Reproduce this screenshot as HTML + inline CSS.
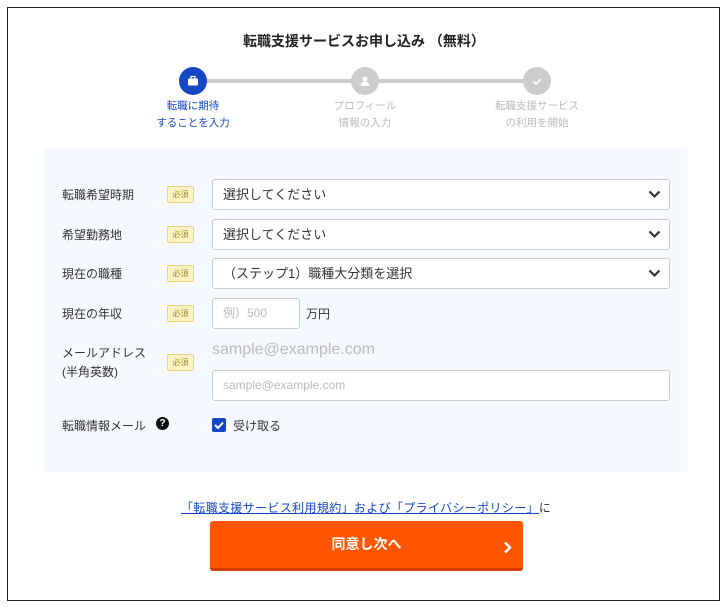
<!DOCTYPE html>
<html><head><meta charset="utf-8"><style>
*{margin:0;padding:0;box-sizing:border-box}
body{width:728px;height:608px;background:#fff;font-family:"Liberation Sans","Noto Sans CJK JP",sans-serif;position:relative;overflow:hidden;color:#333}
.frame{position:absolute;left:7px;top:7px;width:713px;height:594px;border:1px solid #222}
.a{position:absolute}
.title{left:0;width:728px;top:31px;text-align:center;font-size:14px;font-weight:bold;color:#222}
.line{top:79px;height:4px;background:#ccc}
.c{width:28px;height:28px;border-radius:50%;top:67px;background:#ccc}
.st{font-size:10.5px;text-align:center;line-height:17px;top:98px;width:140px;color:#bbb}
.panel{left:44px;top:148px;width:644px;height:324px;background:#f5f8fe;border-radius:4px}
.lb{left:62px;font-size:12px;color:#333}
.req{left:167px;width:27px;height:17px;background:#fdf3c4;border:1px solid #e6d47a;border-radius:2px;font-size:8px;color:#a08a2a;text-align:center;line-height:15px}
.sel{left:212px;width:458px;height:31px;background:#fff;border:1px solid #ccc;border-radius:3px;font-size:13px;line-height:29px;padding-left:10px;color:#333}
.chev{position:absolute;right:8px;top:9px}
</style></head><body>
<div class="frame"></div>
<div class="a title">転職支援サービスお申し込み （無料）</div>
<div class="a line" style="left:193px;width:344px"></div>
<div class="a c" style="left:179px;background:#1547c5"></div>
<svg class="a" style="left:187px;top:75px" width="12" height="12" viewBox="0 0 12 12"><rect x="1" y="3.5" width="10" height="7" rx="1" fill="#fff"/><rect x="4" y="1.5" width="4" height="3" fill="none" stroke="#fff" stroke-width="1.2"/></svg>
<div class="a c" style="left:351px"></div>
<svg class="a" style="left:359px;top:75px" width="12" height="12" viewBox="0 0 12 12"><circle cx="6" cy="4" r="2.5" fill="#fff"/><path d="M1.5 11c0-3 2-4.5 4.5-4.5s4.5 1.5 4.5 4.5z" fill="#fff"/></svg>
<div class="a c" style="left:523px"></div>
<svg class="a" style="left:531px;top:75px" width="12" height="12" viewBox="0 0 12 12"><path d="M2.5 6.5l2.5 2.5 5-5" stroke="#fff" stroke-width="1.8" fill="none"/></svg>
<div class="a st" style="left:123px;color:#1547c5">転職に期待<br>することを入力</div>
<div class="a st" style="left:295px">プロフィール<br>情報の入力</div>
<div class="a st" style="left:467px">転職支援サービス<br>の利用を開始</div>
<div class="a panel"></div>
<div class="a lb" style="top:186px">転職希望時期</div>
<div class="a req" style="top:186px">必須</div>
<div class="a sel" style="top:179px">選択してください<svg class="chev" width="13" height="10" viewBox="0 0 13 10"><path d="M1.5 2.5l5 5 5-5" stroke="#333" stroke-width="2.2" fill="none"/></svg></div>
<div class="a lb" style="top:226px">希望勤務地</div>
<div class="a req" style="top:226px">必須</div>
<div class="a sel" style="top:219px">選択してください<svg class="chev" width="13" height="10" viewBox="0 0 13 10"><path d="M1.5 2.5l5 5 5-5" stroke="#333" stroke-width="2.2" fill="none"/></svg></div>
<div class="a lb" style="top:265px">現在の職種</div>
<div class="a req" style="top:265px">必須</div>
<div class="a sel" style="top:258px">（ステップ1）職種大分類を選択<svg class="chev" width="13" height="10" viewBox="0 0 13 10"><path d="M1.5 2.5l5 5 5-5" stroke="#333" stroke-width="2.2" fill="none"/></svg></div>
<div class="a lb" style="top:305px">現在の年収</div>
<div class="a req" style="top:305px">必須</div>
<div class="a sel" style="top:298px;width:88px;color:#bbb;font-size:12px">例）500</div>
<div class="a" style="left:306px;top:305px;font-size:12px">万円</div>
<div class="a lb" style="top:344px;line-height:19px">メールアドレス<br>(半角英数)</div>
<div class="a req" style="top:354px">必須</div>
<div class="a" style="left:212px;top:341px;font-size:16px;color:#bbb">sample@example.com</div>
<div class="a sel" style="top:370px;color:#bbb;font-size:12px">sample@example.com</div>
<div class="a lb" style="top:417px">転職情報メール</div>
<div class="a" style="left:156px;top:417px;width:13px;height:13px;border-radius:50%;background:#111;color:#fff;font-size:10px;font-weight:bold;text-align:center;line-height:13px">?</div>
<div class="a" style="left:212px;top:418px;width:14px;height:14px;background:#1547c5;border-radius:2px"></div>
<svg class="a" style="left:212px;top:418px" width="14" height="14" viewBox="0 0 14 14"><path d="M3 7l3 3 5-5.5" stroke="#fff" stroke-width="2" fill="none"/></svg>
<div class="a" style="left:233px;top:417px;font-size:12px">受け取る</div>
<div class="a" style="left:181px;top:499px;font-size:12px;color:#333;letter-spacing:0.35px"><span style="color:#1547c5;text-decoration:underline">「転職支援サービス利用規約」および「プライバシーポリシー」</span>に</div>
<div class="a" style="left:210px;top:521px;width:313px;height:50px;background:#ff5400;border-radius:3px;border-bottom:3px solid #d43c00;color:#fff;font-size:14px;font-weight:bold;text-align:center;line-height:47px">同意し次へ</div>
<svg class="a" style="left:503px;top:541px" width="10" height="13" viewBox="0 0 10 13"><path d="M2 1.5l5 5-5 5" stroke="#fff" stroke-width="2.4" fill="none"/></svg>
</body></html>
